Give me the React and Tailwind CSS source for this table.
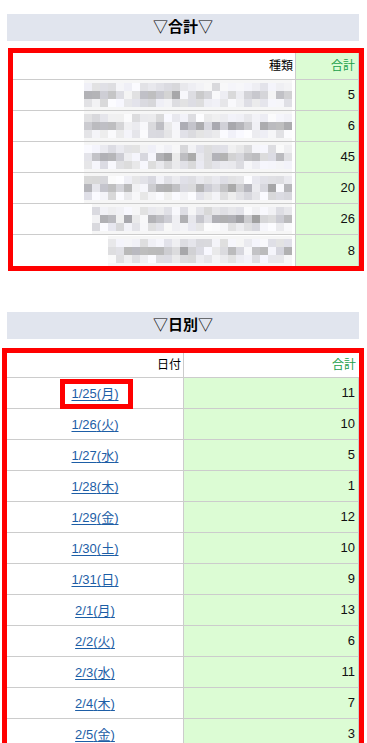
import React from 'react';

const FONT = { fontFamily: '"Liberation Sans", Arial, "Noto Sans CJK JP", sans-serif' };

// pixelated (blurred) names in the first table
const makeMosaic = (seed, cols) => {
  let s = seed;
  const next = () => {
    s = (s * 9301 + 49297) % 233280;
    return s / 233280;
  };
  return [0, 1, 2].map((r) =>
    Array.from({ length: cols }, () => {
      const base = r === 1 ? 160 + next() * 90 : 215 + next() * 38;
      const v = Math.round(base);
      return `rgb(${v},${v},${Math.min(255, v + Math.round(next() * 8))})`;
    })
  );
};

const totals = [
  { value: 5, seed: 11, cols: 26 },
  { value: 6, seed: 27, cols: 26 },
  { value: 45, seed: 43, cols: 26 },
  { value: 20, seed: 71, cols: 26 },
  { value: 26, seed: 97, cols: 25 },
  { value: 8, seed: 131, cols: 23 },
];

const days = [
  ['1/25', '月', 11],
  ['1/26', '火', 10],
  ['1/27', '水', 5],
  ['1/28', '木', 1],
  ['1/29', '金', 12],
  ['1/30', '土', 10],
  ['1/31', '日', 9],
  ['2/1', '月', 13],
  ['2/2', '火', 6],
  ['2/3', '水', 11],
  ['2/4', '木', 7],
  ['2/5', '金', 3],
];

const Mosaic = ({ seed, cols }) => {
  const grid = makeMosaic(seed, cols);
  return (
    <div className="flex flex-col">
      <div className="h-[3px] bg-[#f6f6f6]" />
      {grid.map((row, i) => (
        <div key={i} className="flex justify-end">
          {row.map((c, j) => (
            <div key={j} className="w-[8px] h-[8px]" style={{ backgroundColor: c }} />
          ))}
        </div>
      ))}
      <div className="h-[3px] bg-[#f6f6f6]" />
    </div>
  );
};

const SectionTitle = ({ label }) => (
  <div className="ml-[7px] w-[352px] h-[27px] bg-[#e1e5ee] flex items-center justify-center text-[15px] text-black">
    <span className="font-normal">▽</span>
    <span className="font-bold">{label}</span>
    <span className="font-normal">▽</span>
  </div>
);

export default function App() {
  return (
    <div className="min-h-[743px] bg-white pt-[14px] overflow-hidden" style={FONT}>
      <SectionTitle label="合計" />

      {/* totals by type */}
      <div className="mt-[7px] ml-[8px] w-[356px] border-[5px] border-[#ff0000]">
        <div className="flex h-[27px] border-b border-[#cccccc] text-[12px]">
          <div className="w-[283px] border-r border-[#cccccc] flex items-center justify-end pr-[2px] text-black">種類</div>
          <div className="flex-1 bg-[#dcfcd4] flex items-center justify-end pr-[3px] text-[#21a04a] border-r border-[#cccccc]">合計</div>
        </div>
        {totals.map((t, i) => (
          <div key={i} className={`flex h-[31px] text-[13px] ${i < totals.length - 1 ? 'border-b border-[#cccccc]' : ''}`}>
            <div className="w-[283px] border-r border-[#cccccc] flex items-center justify-end pr-[3px]">
              <Mosaic seed={t.seed} cols={t.cols} />
            </div>
            <div className="flex-1 bg-[#dcfcd4] flex items-center justify-end pr-[3px] text-[#111] border-r border-[#cccccc]">{t.value}</div>
          </div>
        ))}
      </div>

      <div className="mt-[41px]">
        <SectionTitle label="日別" />
      </div>

      {/* totals by day */}
      <div className="mt-[9px] ml-[2px] w-[362px] border-[5px] border-[#ff0000]">
        <div className="flex h-[25px] border-b border-[#cccccc] text-[12px]">
          <div className="w-[177px] border-r border-[#cccccc] flex items-center justify-end pr-[2px] text-black">日付</div>
          <div className="flex-1 bg-white flex items-center justify-end pr-[3px] text-[#21a04a]">合計</div>
        </div>
        {days.map(([d, w, v], i) => (
          <div key={d} className="flex h-[31px] border-b border-[#cccccc] text-[13px]">
            <div className="relative w-[177px] border-r border-[#cccccc] flex items-center justify-center">
              <a href="#" className="text-[#1d5ea6] underline underline-offset-2 pt-[2px]">
                {d}({w})
              </a>
              {i === 0 && (
                <div className="absolute left-[53px] top-[1px] w-[73px] h-[30px] border-[5px] border-[#ff0000]" />
              )}
            </div>
            <div className="flex-1 bg-[#dcfcd4] flex items-center justify-end pr-[3px] text-[#111] border-r border-[#cccccc]">{v}</div>
          </div>
        ))}
      </div>
    </div>
  );
}
